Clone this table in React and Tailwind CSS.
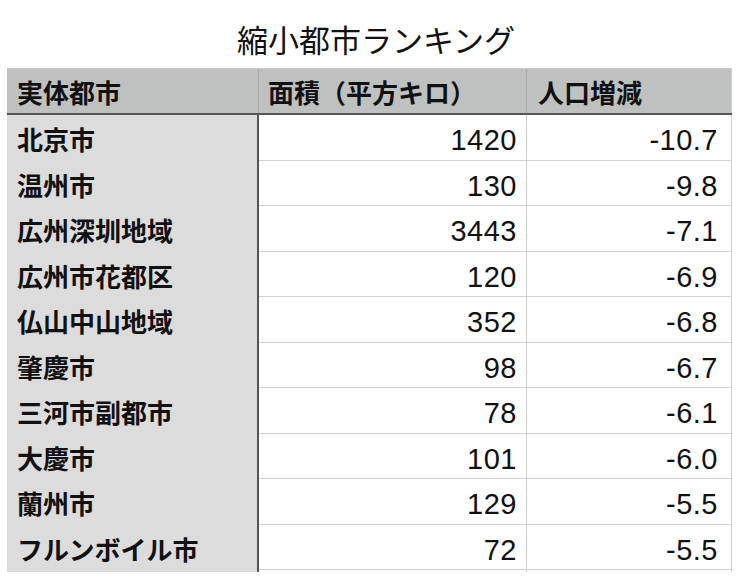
const rows = [
  ["北京市", "1420", "-10.7"],
  ["温州市", "130", "-9.8"],
  ["広州深圳地域", "3443", "-7.1"],
  ["広州市花都区", "120", "-6.9"],
  ["仏山中山地域", "352", "-6.8"],
  ["肇慶市", "98", "-6.7"],
  ["三河市副都市", "78", "-6.1"],
  ["大慶市", "101", "-6.0"],
  ["蘭州市", "129", "-5.5"],
  ["フルンボイル市", "72", "-5.5"],
];

const cjk = { fontFamily: '"Noto Sans CJK JP", "Noto Sans", sans-serif' };
const num = { fontFamily: '"Liberation Sans", Arial, sans-serif' };

export default function App() {
  return (
    <div className="w-[748px] h-[583px] bg-white overflow-hidden">
      <div className="h-[68px] flex items-center justify-center pt-[10px] pl-[4px] text-[31px] text-[#111]" style={cjk}>
        縮小都市ランキング
      </div>
      <div className="ml-[7px] w-[725px]">
        <div className="grid grid-cols-[252px_268px_205px] h-[47px] bg-[#bfc1c0] border-t border-[#c8c8c8] border-b-2 border-b-[#555] text-[26px] font-bold text-[#111]" style={cjk}>
          <div className="flex items-center pl-[10px] border-r border-[#a9abaa]">実体都市</div>
          <div className="flex items-center pl-[9px] border-r border-[#a9abaa]">面積（平方キロ）</div>
          <div className="flex items-center pl-[11px] border-r border-[#d0d0d0]">人口増減</div>
        </div>
        {rows.map((r, i) => (
          <div key={i} className="grid grid-cols-[252px_268px_205px] h-[45.5px] border-b border-[#d2d2d2]">
            <div className="flex items-center pl-[10px] bg-[#dcdcdc] border-r-2 border-r-[#555] text-[26px] font-bold text-[#111]" style={cjk}>
              {r[0]}
            </div>
            <div className="flex items-center justify-end pt-[4px] pr-[9px] border-r border-[#d2d2d2] text-[29px] tracking-[0.5px] text-[#111]" style={num}>
              {r[1]}
            </div>
            <div className="flex items-center justify-end pt-[4px] pr-[13px] border-r border-[#d2d2d2] text-[29px] tracking-[0.5px] text-[#111]" style={num}>
              {r[2]}
            </div>
          </div>
        ))}
      </div>
    </div>
  );
}
